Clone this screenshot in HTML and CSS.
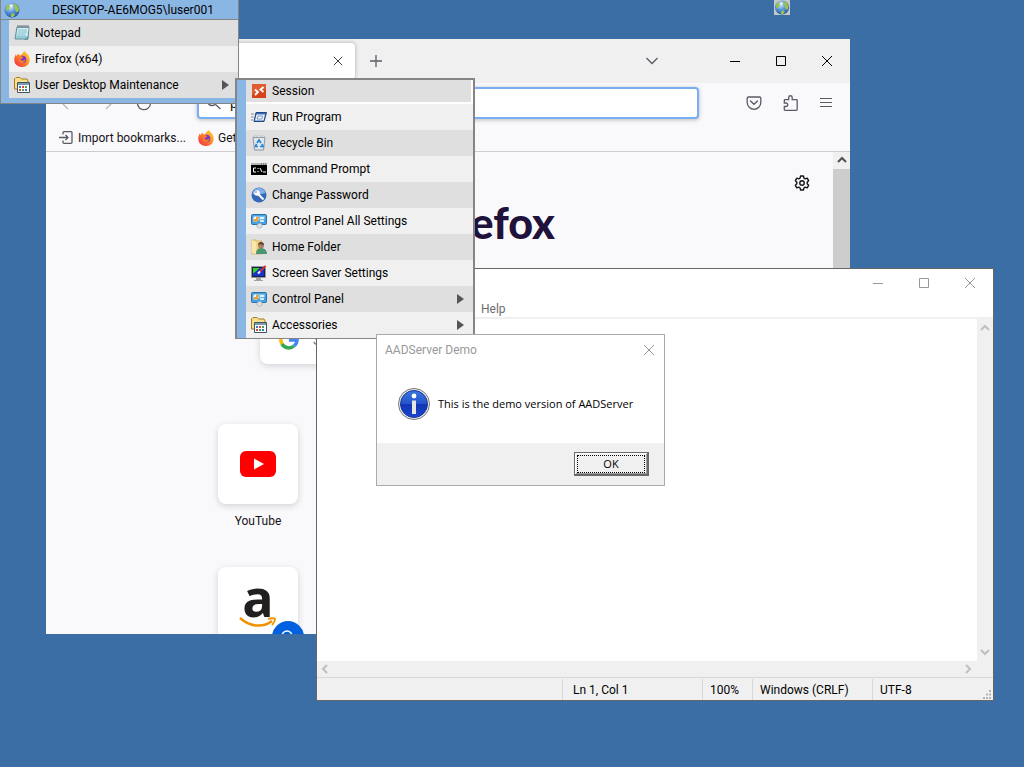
FILE: index.html
```html
<!DOCTYPE html>
<html lang="en">
    <head>
        <meta charset="utf-8">
        <meta name="viewport" content="width=device-width, initial-scale=1">
        <title>Desktop</title>
        <link rel="stylesheet" href="styles.css">
    </head>
    <body>
        <!-- shared icons -->
        <svg class="defs" aria-hidden="true">
            <defs>
                <radialGradient id="sea" cx=".4" cy=".3" r=".7"><stop offset="0" stop-color="#d5e9ff"/><stop offset=".5" stop-color="#5f98e0"/><stop offset="1" stop-color="#2458ad"/></radialGradient>
                <linearGradient id="fire" x1="1" y1="0" x2="0" y2="1"><stop offset="0" stop-color="#ffdf38"/><stop offset=".45" stop-color="#ff8b22"/><stop offset="1" stop-color="#f0224f"/></linearGradient>
                <linearGradient id="info" x1="0" y1="0" x2="0" y2="1"><stop offset="0" stop-color="#3b76dc"/><stop offset=".5" stop-color="#2454cb"/><stop offset=".52" stop-color="#1235b4"/><stop offset="1" stop-color="#1b46cf"/></linearGradient>
            </defs>
            <symbol id="i-globe" viewBox="0 0 16 16">
                <circle cx="8" cy="8" r="7.5" fill="url(#sea)"/>
                <path d="M2 5 4 2.500l2 .5-.5 3L4 8l-2 1zM10 1.500l3 1.500 2 4-1 3-2 0-1-3 0-2-2-1zM7 12l3-1 1 2-2 2H7z" fill="#9ac545"/>
                <path d="M5 3.500 9 2.500 8 5z" fill="#f1f8ff"/>
            </symbol>
            <symbol id="i-notepad" viewBox="0 0 16 16">
                <path d="M3 2h12l-1 12H1z" fill="#9bcfda" stroke="#5c8f9b"/>
                <path d="M3.500 3h11l-1 8H2.500z" fill="#d6f1f5"/>
                <path d="M4 5h9M4 7h9M3 9h9M3 11h9" stroke="#82bdc9"/>
                <path d="M4 0v3M6 0v3M8 0v3M10 0v3M12 0v3M14 0v3" stroke="#6d767b"/>
                <path d="m10 15 4-4v4z" fill="#6d9aa5"/>
            </symbol>
            <symbol id="i-firefox" viewBox="0 0 16 16">
                <path d="M11 0c.5 2 2.500 2.500 3.700 4.700C16.300 8 15.900 11.500 13.500 14c-3 2.800-8 2.600-11 0C-.2 11.500-.5 7 2 3.200l.4 2L4.300 2.500l1.200 2c2-.5 3-1.200 3.200-2.500C9 1.200 10 .5 11 0z" fill="url(#fire)"/>
                <circle cx="8.500" cy="8.500" r="3.800" fill="#7239cf"/>
                <path d="M5 5.500c2-1 3.500 0 4.500 1-1 .2-1 1-2 1.200-.8.200-1 .8-.5 1.300 1 1 3 1 4.500-1-.2 3-2 4.500-4.300 4C4.700 11.500 3.800 8 5 5.500z" fill="#ff7a28"/>
            </symbol>
            <symbol id="i-folder" viewBox="0 0 16 16">
                <path d="M.5 12V2l1.500-1.500h4L7.500 2H13l1 2v8z" fill="#f7df8b" stroke="#a77b1f"/>
                <path d="M3.500 5.500h12v10h-12z" fill="#fff" stroke="#44545f"/>
                <path d="M4 6h11v2H4z" fill="#779bb3"/>
                <path d="M5 9h2v2H5zM11 12h2v2h-2z" fill="#3c72d1"/>
                <path d="M8 9h2v2H8zM5 12h2v2H5z" fill="#d74b34"/>
                <path d="M11 9h2v2h-2zM8 12h2v2H8z" fill="#46a050"/>
            </symbol>
            <symbol id="i-session" viewBox="0 0 16 16">
                <path d="M1 1h14v14H1z" fill="#d5431b"/>
                <path d="M1 1h14v5L1 11z" fill="#e35c2f"/>
                <path d="m4 6.500 3 2.500-3 3M12.500 4 9.500 6.500l3 2.500" fill="none" stroke="#fff" stroke-width="1.800"/>
            </symbol>
            <symbol id="i-run" viewBox="0 0 16 16">
                <path d="M5 3.500h10.500L13 12.500H3z" fill="#3a6dba" stroke="#24447d"/>
                <path d="M5.500 5.500h8.500l-1.500 6H4z" fill="#eef5ff"/>
                <path d="M7 7h4.500l-.7 3H6z" fill="#fff" stroke="#7793bb"/>
                <path d="M0 5h3M0 8h2.500M0 11h2" stroke="#7e8795"/>
            </symbol>
            <symbol id="i-bin" viewBox="0 0 16 16">
                <path d="M2 2.500h12L12.500 15h-9z" fill="#e0e6ea" stroke="#8d989f"/>
                <path d="m2 2 2-1.500 2 1L8 0l2 1.500 2-1L14 2z" fill="#fff" stroke="#a6adb1" stroke-width=".6"/>
                <path d="m6 8 2-3 2 3M11 9l1 2.500H9M7 11.500H4.500L5.500 9" fill="none" stroke="#2385d7" stroke-width="1.700"/>
            </symbol>
            <symbol id="i-cmd" viewBox="0 0 16 16">
                <path d="M0 2h16v12H0z" fill="#b4b8bb"/>
                <path d="M0 4h16v10H0z" fill="#000"/>
                <path d="M10 3h1M12 3h1M14 3h1" stroke="#555"/>
                <path d="M5 7H2.500v4H5M7 7v1M7 10v1M9 7l2 4M12 11h3" fill="none" stroke="#fff"/>
            </symbol>
            <symbol id="i-key" viewBox="0 0 16 16">
                <circle cx="8" cy="8" r="7.500" fill="#3568b9"/>
                <path d="M1.500 7C2 3 5 1 8 1s6 2 6.500 5C10 7 6 9 1.500 7z" fill="#82afe7"/>
                <circle cx="6" cy="6" r="2.800" fill="#fff"/>
                <circle cx="5" cy="5" r=".8" fill="#3d6bb3"/>
                <path d="m7.500 7.500 5 5" stroke="#fff" stroke-width="2"/>
            </symbol>
            <symbol id="i-panel" viewBox="0 0 16 16">
                <rect x=".5" y="1.500" width="15" height="10" rx="1" fill="#4aa1df" stroke="#2870a8"/>
                <path d="M2 3h12v3L2 9z" fill="#75c0ef"/>
                <circle cx="5" cy="6" r="2.500" fill="#fff"/>
                <path d="M5 6V3.500A2.500 2.500 0 1 1 2.500 6z" fill="#f4a02c"/>
                <path d="M9 5h4M9 8h4" stroke="#fff" stroke-width="1.500"/>
                <path d="M6 12c1-2 5-2 5 0v2l-2.500 1.500L6 14z" fill="#dce1e5" stroke="#9aa2a8" stroke-width=".6"/>
            </symbol>
            <symbol id="i-home" viewBox="0 0 16 16">
                <path d="M1 1h4l1 1h5v13H1z" fill="#f2d583" stroke="#d5ab4a" stroke-width=".7"/>
                <path d="M1 1 5 3v12l-4-1z" fill="#fae7a9"/>
                <path d="M5 15c0-4 2-6 5-6s6 2 6 6z" fill="#4c9572"/>
                <circle cx="10" cy="6.500" r="3" fill="#a98067"/>
                <path d="M7 6c0-4 6-4 6 0-2 0-3-1-4-1z" fill="#564235"/>
            </symbol>
            <symbol id="i-saver" viewBox="0 0 16 16">
                <path d="M.5 1.500h14v11H.5z" fill="#15204f" stroke="#999"/>
                <path d="M2 3h7L2 9z" fill="#38d02a"/>
                <path d="M9 3h4v8H2V9z" fill="#1932c9"/>
                <path d="M14.500 1 9 6.500" stroke="#d52f36" stroke-width="1.800"/>
                <path d="M9 6.500 7 8.500" stroke="#fff" stroke-width="2"/>
                <path d="M5 13h5v2h2v1H3v-1h2z" fill="#a4a4a4"/>
            </symbol>
            <symbol id="i-close" viewBox="0 0 12 12"><path d="m1 1 10 10M11 1 1 11" fill="none" stroke="currentColor"/></symbol>
            <symbol id="i-max" viewBox="0 0 12 12"><path d="M1.500 1.500h9v9h-9z" fill="none" stroke="currentColor"/></symbol>
            <symbol id="i-min" viewBox="0 0 12 12"><path d="M1 6.500h10" stroke="currentColor"/></symbol>
            <symbol id="i-up" viewBox="0 0 12 12"><path d="m2 8 4-4 4 4" fill="none" stroke="currentColor" stroke-width="2"/></symbol>
        </svg>

        <div class="tray"><svg width="16" height="15"><use href="#i-globe"/></svg></div>

        <main class="window firefox">
            <header class="tabstrip">
                <div class="tab">
                    <button class="plain" aria-label="Close tab"><svg width="10" height="10"><use href="#i-close"/></svg></button>
                </div>
                <button class="plain new-tab" aria-label="New tab"><svg width="14" height="14" viewBox="0 0 14 14"><path d="M7 1v12M1 7h12" stroke="#5b5b66" stroke-width="1.300"/></svg></button>
                <button class="plain list-tabs" aria-label="List tabs"><svg width="14" height="8" viewBox="0 0 14 8"><path d="m1.500 1 5.500 5.500L12.500 1" fill="none" stroke="#5b5b66" stroke-width="1.300"/></svg></button>
                <div class="controls">
                    <button class="plain" aria-label="Minimize"><svg width="12" height="12"><use href="#i-min"/></svg></button>
                    <button class="plain" aria-label="Maximize"><svg width="12" height="12"><use href="#i-max"/></svg></button>
                    <button class="plain" aria-label="Close"><svg width="12" height="12"><use href="#i-close"/></svg></button>
                </div>
            </header>
            <div class="navbar">
                <div class="nav-buttons">
                    <button class="plain" aria-label="Back"><svg width="16" height="16" viewBox="0 0 16 16"><path d="M14 8H3M8 2 2 8l6 6" fill="none" stroke="#b5b5bb" stroke-width="1.300"/></svg></button>
                    <button class="plain" aria-label="Forward"><svg width="16" height="16" viewBox="0 0 16 16"><path d="M2 8h11M8 2l6 6-6 6" fill="none" stroke="#b5b5bb" stroke-width="1.300"/></svg></button>
                    <button class="plain" aria-label="Reload"><svg width="16" height="16" viewBox="0 0 16 16"><path d="M13 4a6.500 6.500 0 1 0 1.500 4M14 1v4h-4" fill="none" stroke="#5b5b66" stroke-width="1.300"/></svg></button>
                </div>
                <label class="urlbar">
                    <svg width="16" height="16" viewBox="0 0 16 16"><circle cx="6" cy="6" r="4.500" fill="none" stroke="#5b5b66" stroke-width="1.300"/><path d="m9.500 9.500 5 4.500" stroke="#5b5b66" stroke-width="1.300"/></svg>
                    <input type="text" value="p" aria-label="Address">
                </label>
                <div class="nav-tools">
                    <button class="plain" aria-label="Pocket"><svg width="16" height="16" viewBox="0 0 16 16"><path d="M2.500 2h11q1.300 0 1.300 1.300V7.500a6.800 6.800 0 0 1-13.600 0V3.300Q1.200 2 2.500 2zM4.500 6 8 9.300 11.500 6" fill="none" stroke="#5b5b66" stroke-width="1.300" stroke-linecap="round"/></svg></button>
                    <button class="plain" aria-label="Extensions"><svg width="16" height="16" viewBox="0 0 16 16"><path d="M3 15.300q-.7 0-.7-.7v-3.100H4a1.600 1.600 0 0 0 0-3.500H2.300V5.500q0-.8.700-.8h3.700V2.500a1.700 1.700 0 0 1 3.500 0v2.200h4.200q.8 0 .8.800v9q0 .8-.8.800z" fill="none" stroke="#5b5b66" stroke-width="1.300"/></svg></button>
                    <button class="plain" aria-label="Menu"><svg width="16" height="16" viewBox="0 0 16 16"><path d="M2 3.500h12M2 7.500h12M2 11.500h12" stroke="#5b5b66" stroke-width="1.200"/></svg></button>
                </div>
            </div>
            <nav class="bookmarks">
                <a href="#import"><svg width="16" height="16" viewBox="0 0 16 16"><path d="M5 4.500V2.700q0-1 1-1h7q1 0 1 1v9.600q0 1-1 1H6q-1 0-1-1v-1.800M1 7.500h9M7.500 5 10 7.500 7.500 10" fill="none" stroke="#5b5b66" stroke-width="1.300"/></svg>Import bookmarks...</a>
                <a href="#start"><svg width="16" height="16"><use href="#i-firefox"/></svg>Get</a>
            </nav>
            <div class="viewport">
                <section class="newtab">
                    <div class="settings">
                        <button class="plain" aria-label="Settings"><svg width="16" height="16" viewBox="0 0 16 16"><path d="M6.600 1h2.800l.5 2 1.300.8 2-.6 1.400 2.500L13.200 7.200v1.600l1.400 1.500-1.400 2.500-2-.6-1.300.8-.5 2H6.600l-.5-2-1.300-.8-2 .6-1.400-2.500 1.400-1.500V7.200L1.400 5.700l1.400-2.500 2 .6L6.100 3z" fill="none" stroke="#15141a" stroke-width="1.400" stroke-linejoin="round"/><circle cx="8" cy="8" r="2.200" fill="none" stroke="#15141a" stroke-width="1.400"/></svg></button>
                    </div>
                    <h1 class="wordmark">Firefox</h1>
                    <label class="search">
                        <svg width="20" height="20" viewBox="0 0 20 20" fill="none" stroke-width="3.500"><path d="M15.500 4A8 8 0 0 0 3 6" stroke="#ea4335"/><path d="M3 6a8 8 0 0 0 0 8" stroke="#fbbc05"/><path d="M3 14a8 8 0 0 0 12 2" stroke="#34a853"/><path d="M15 16a8 8 0 0 0 3-6h-8" stroke="#4285f4"/></svg>
                        <input type="text" placeholder="Search" aria-label="Search the web">
                    </label>
                    <div class="sites">
                        <a class="site" href="#youtube">
                            <span class="tile"><svg width="36" height="26" viewBox="0 0 36 26"><rect width="36" height="26" rx="6" fill="#f00"/><path d="m14 7.500 10 5.500-10 5.500z" fill="#fff"/></svg></span>
                            <span class="site-name">YouTube</span>
                        </a>
                        <a class="site" href="#amazon">
                            <span class="tile"><span class="letter">a</span><svg width="38" height="12" viewBox="0 0 38 12"><path d="M1 1c10 9 23 10 32 3" fill="none" stroke="#f29100" stroke-width="2.500"/><path d="M29 2c3-1 7-1 7 0s-1 4-3 6" fill="none" stroke="#f29100" stroke-width="1.800"/></svg>
                                <span class="badge"><svg width="16" height="16" viewBox="0 0 16 16"><circle cx="7" cy="7" r="5" fill="none" stroke="#fff" stroke-width="1.500"/><path d="m11 11 4 4" stroke="#fff" stroke-width="1.500"/></svg></span>
                            </span>
                        </a>
                    </div>
                </section>
                <div class="scroll-track">
                    <svg width="12" height="16" viewBox="0 0 12 16"><path d="m2 10 4-4 4 4" fill="none" stroke="#505050" stroke-width="2"/></svg>
                    <div class="thumb"></div>
                </div>
            </div>
        </main>

        <section class="window notepad">
            <header class="np-title">
                <button class="plain" aria-label="Minimize"><svg width="12" height="12"><use href="#i-min"/></svg></button>
                <button class="plain" aria-label="Maximize"><svg width="12" height="12"><use href="#i-max"/></svg></button>
                <button class="plain" aria-label="Close"><svg width="12" height="12"><use href="#i-close"/></svg></button>
            </header>
            <nav class="np-menu"><button class="plain">Help</button></nav>
            <div class="np-edit">
                <textarea aria-label="Text editor"></textarea>
                <div class="np-vscroll">
                    <svg width="12" height="12"><use href="#i-up"/></svg>
                    <svg class="down" width="12" height="12"><use href="#i-up"/></svg>
                </div>
            </div>
            <div class="np-hscroll">
                <svg class="left" width="12" height="12"><use href="#i-up"/></svg>
                <svg class="right" width="12" height="12"><use href="#i-up"/></svg>
            </div>
            <footer class="np-status">
                <span></span>
                <span>Ln 1, Col 1</span>
                <span>100%</span>
                <span>Windows (CRLF)</span>
                <span>UTF-8</span>
                <svg width="10" height="10" viewBox="0 0 10 10"><path d="M7 0h2v2H7zM4 3.500h2v2H4zM7 3.500h2v2H7zM1 7h2v2H1zM4 7h2v2H4zM7 7h2v2H7z" fill="#b4b4b4"/></svg>
            </footer>
        </section>

        <nav class="menu main-menu">
            <header class="menu-head"><svg width="16" height="16"><use href="#i-globe"/></svg><span>DESKTOP-AE6MOG5\luser001</span></header>
            <div class="menu-items">
                <button class="item"><svg><use href="#i-notepad"/></svg>Notepad</button>
                <button class="item"><svg><use href="#i-firefox"/></svg>Firefox (x64)</button>
                <button class="item more"><svg><use href="#i-folder"/></svg>User Desktop Maintenance</button>
            </div>
        </nav>

        <nav class="menu sub-menu">
            <div class="menu-items">
                <button class="item selected"><svg><use href="#i-session"/></svg>Session</button>
                <button class="item"><svg><use href="#i-run"/></svg>Run Program</button>
                <button class="item"><svg><use href="#i-bin"/></svg>Recycle Bin</button>
                <button class="item"><svg><use href="#i-cmd"/></svg>Command Prompt</button>
                <button class="item"><svg><use href="#i-key"/></svg>Change Password</button>
                <button class="item"><svg><use href="#i-panel"/></svg>Control Panel All Settings</button>
                <button class="item"><svg><use href="#i-home"/></svg>Home Folder</button>
                <button class="item"><svg><use href="#i-saver"/></svg>Screen Saver Settings</button>
                <button class="item more"><svg><use href="#i-panel"/></svg>Control Panel</button>
                <button class="item more"><svg><use href="#i-folder"/></svg>Accessories</button>
            </div>
        </nav>

        <section class="window dialog" role="dialog" aria-labelledby="dialog-title">
            <header class="dialog-title">
                <span id="dialog-title">AADServer Demo</span>
                <button class="plain" aria-label="Close"><svg width="12" height="12"><use href="#i-close"/></svg></button>
            </header>
            <div class="dialog-body">
                <svg width="32" height="32" viewBox="0 0 32 32"><circle cx="16" cy="16" r="15.500" fill="#eee" stroke="#777"/><circle cx="16" cy="16" r="13.500" fill="url(#info)" stroke="#14379b"/><circle cx="16" cy="8" r="2.400" fill="#fff"/><path d="M14 12.500h4V26h-4z" fill="#e6e6e6"/></svg>
                <p>This is the demo version of AADServer</p>
            </div>
            <footer class="dialog-foot"><button class="ok"><span>OK</span></button></footer>
        </section>
    </body>
</html>
```
FILE: styles.css
```css
* {
    box-sizing: border-box;
}
body {
    margin: 0;
    min-height: 100vh;
    position: relative;
    overflow: hidden;
    background: #3a6ea5;
    color: #000;
    font: 12px/16px Roboto, "Open Sans", sans-serif;
}
svg {
    display: block;
    flex: none;
}
button, input, textarea {
    font: inherit;
    color: inherit;
    border: 0;
    padding: 0;
    margin: 0;
    background: none;
}
a {
    color: inherit;
    text-decoration: none;
}
.defs {
    position: absolute;
    width: 0;
    height: 0;
}
.plain {
    display: flex;
    align-items: center;
    justify-content: center;
}
.window {
    position: absolute;
    display: flex;
    flex-direction: column;
}
.tray {
    position: absolute;
    left: 774px;
    top: 0;
    background: #c6c9c4;
}

/* browser */
.firefox {
    left: 46px;
    top: 39px;
    width: 804px;
    height: 595px;
    overflow: hidden;
    background: #f9f9fb;
    color: #15141a;
}
.tabstrip {
    display: flex;
    align-items: center;
    height: 44px;
    background: #f0f0f0;
}
.tab {
    display: flex;
    justify-content: flex-end;
    width: 309px;
    height: 36px;
    padding-right: 12px;
    border-radius: 4px;
    background: #fff;
    box-shadow: 0 0 4px rgb(0 0 0 / 30%);
}
.new-tab {
    margin-left: 14px;
}
.list-tabs {
    margin-left: auto;
}
.controls {
    display: flex;
    margin-left: 53px;
    color: #000;
}
.controls .plain, .np-title .plain {
    width: 46px;
    height: 28px;
}
.navbar {
    display: flex;
    align-items: center;
    height: 40px;
}
.nav-buttons {
    display: flex;
    gap: 22px;
    padding-left: 14px;
    width: 151px;
}
.urlbar {
    display: flex;
    align-items: center;
    gap: 8px;
    width: 502px;
    height: 32px;
    padding-left: 7px;
    border: 2px solid #78aef2;
    border-radius: 4px;
    background: #fff;
    box-shadow: 0 1px 4px rgb(0 0 0 / 25%);
}
.urlbar input {
    flex: 1;
    min-width: 0;
    font-size: 14px;
    outline: 0;
}
.nav-tools {
    display: flex;
    gap: 20px;
    margin-left: auto;
    padding-right: 16px;
}
.bookmarks {
    display: flex;
    align-items: center;
    gap: 12px;
    height: 29px;
    padding: 1px 0 0 12px;
    border-bottom: 1px solid #ccccd1;
}
.bookmarks a {
    display: flex;
    align-items: center;
    gap: 4px;
}
.viewport {
    display: flex;
    flex: 1;
    min-height: 0;
}
.newtab {
    flex: 1;
    padding-top: 23px;
}
.settings {
    display: flex;
    justify-content: flex-end;
    padding-right: 23px;
}
.wordmark {
    margin: 8px 278px 0 0;
    text-align: right;
    color: #20123a;
    font: 900 43px/48px Lato, sans-serif;
}
.search {
    display: flex;
    align-items: center;
    gap: 14px;
    height: 48px;
    margin: 69px 160px 0 214px;
    padding-left: 19px;
    border-radius: 8px;
    background: #fff;
    box-shadow: 0 2px 6px rgb(58 57 68 / 20%);
}
.search input {
    flex: 1;
    font-size: 14px;
}
.sites {
    display: flex;
    flex-direction: column;
    gap: 37px;
    width: 80px;
    margin: 60px 0 0 172px;
}
.site {
    display: flex;
    flex-direction: column;
    align-items: center;
    gap: 8px;
}
.tile {
    position: relative;
    display: flex;
    flex-direction: column;
    align-items: center;
    justify-content: center;
    width: 80px;
    height: 80px;
    border-radius: 8px;
    background: #fff;
    box-shadow: 0 2px 6px rgb(58 57 68 / 20%);
}
.site-name {
    height: 18px;
    line-height: 18px;
}
.letter {
    height: 32px;
    color: #221f1f;
    font: bold 52px/24px "Open Sans", sans-serif;
}
.badge {
    position: absolute;
    right: -6px;
    bottom: -6px;
    display: flex;
    align-items: center;
    justify-content: center;
    width: 32px;
    height: 32px;
    border-radius: 50%;
    background: #0060df;
}
.scroll-track {
    display: flex;
    flex-direction: column;
    align-items: center;
    width: 17px;
    background: #f0f0f0;
}
.thumb {
    flex: 1;
    width: 17px;
    margin-top: 1px;
    background: #cdcdcd;
}

/* notepad */
.notepad {
    left: 316px;
    top: 268px;
    width: 678px;
    height: 433px;
    border: 1px solid #666;
    background: #fff;
}
.np-title {
    display: flex;
    justify-content: flex-end;
    color: #999;
}
.np-menu {
    display: flex;
    align-items: flex-end;
    height: 20px;
    padding-left: 164px;
    color: #6d6d6d;
}
.np-edit {
    display: flex;
    flex: 1;
    border-top: 2px solid #f0f0f0;
}
.np-edit textarea {
    flex: 1;
    resize: none;
    outline: 0;
}
.np-vscroll, .np-hscroll {
    display: flex;
    justify-content: space-between;
    background: #f0f0f0;
    color: #bfbfbf;
}
.np-vscroll {
    flex-direction: column;
    width: 16px;
    padding: 3px 2px;
}
.np-hscroll {
    height: 16px;
    padding: 2px 19px 2px 2px;
}
.down {
    transform: rotate(180deg);
}
.left {
    transform: rotate(-90deg);
}
.right {
    transform: rotate(90deg);
}
.np-status {
    display: grid;
    grid-template-columns: 1fr 140px 50px 120px 110px 11px;
    height: 23px;
    padding-top: 1px;
    border-top: 1px solid #d7d7d7;
    background: #f0f0f0;
}
.np-status span {
    height: 21px;
    padding-left: 7px;
    border-left: 1px solid #d7d7d7;
    line-height: 22px;
}
.np-status span:first-child {
    border-left: 0;
}
.np-status span:nth-child(2) {
    padding-left: 10px;
}
.np-status svg {
    align-self: end;
}

/* start menus */
.menu {
    position: absolute;
    background: #8ab6e3;
}
.main-menu {
    left: 0;
    top: 0;
    width: 239px;
    padding-bottom: 5px;
    border: solid #858585;
    border-width: 0 1px 1px;
}
.menu-head {
    display: flex;
    align-items: center;
    height: 20px;
    padding-left: 3px;
    border-bottom: 1px solid #858585;
}
.menu-head span {
    flex: 1;
    padding-left: 8px;
    text-align: center;
    line-height: 18px;
}
.menu-items {
    display: flex;
    flex-direction: column;
    margin-left: 8px;
}
.item {
    display: flex;
    align-items: center;
    gap: 5px;
    height: 26px;
    padding: 0 9px 0 5px;
    background: #f0f0f0;
    text-align: left;
}
.item:nth-child(odd) {
    background: #dfdfdf;
}
.item svg {
    width: 16px;
    height: 16px;
}
.more::after {
    content: "";
    width: 7px;
    height: 10px;
    margin-left: auto;
    background: #555;
    clip-path: polygon(0 0, 100% 50%, 0 100%);
}
.sub-menu {
    left: 235px;
    top: 78px;
    width: 240px;
    border: 2px solid #858585;
    border-bottom-width: 1px;
}
.sub-menu .menu-items {
    margin-left: 9px;
}
.item.selected {
    height: 24px;
    border: solid #fff;
    border-width: 0 2px 2px 0;
}

/* message box */
.dialog {
    left: 376px;
    top: 334px;
    width: 289px;
    border: 1px solid #aaa;
    background: #fff;
}
.dialog-title {
    display: flex;
    align-items: center;
    justify-content: space-between;
    height: 30px;
    padding: 0 9px 0 8px;
    color: #999;
}
.dialog-body {
    display: flex;
    align-items: center;
    gap: 8px;
    height: 78px;
    padding-left: 21px;
}
.dialog-body p {
    margin: 0;
    font-family: "Open Sans", sans-serif;
    font-size: 11px;
}
.dialog-foot {
    display: flex;
    justify-content: flex-end;
    padding: 9px 15px;
    background: #f0f0f0;
}
.ok {
    width: 75px;
    height: 24px;
    padding: 1px;
    border: 1px solid #696969;
    border-width: 1px 2px 2px 1px;
    background: #f0f0f0;
    box-shadow: inset 1px 1px #fff, inset -1px -1px #a0a0a0;
    font-family: "Open Sans", sans-serif;
    font-size: 11px;
}
.ok span {
    display: block;
    margin: 0 1px;
    border: 1px dotted #000;
}
```
